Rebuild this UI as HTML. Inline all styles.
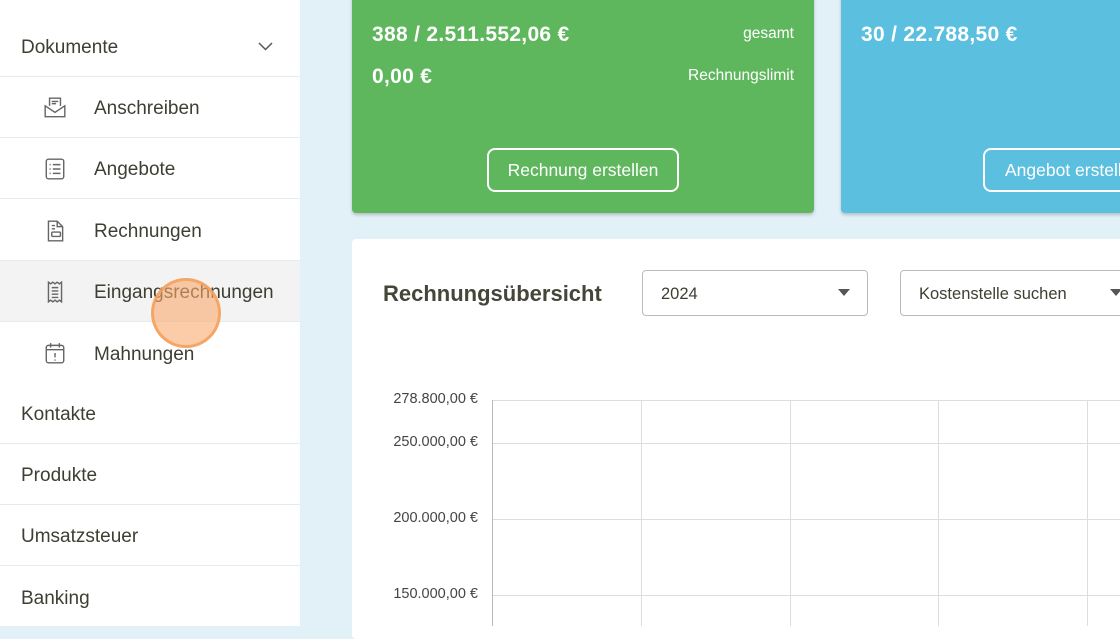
<!DOCTYPE html>
<html><head><meta charset="utf-8"><style>
*{margin:0;padding:0;box-sizing:border-box}
body{width:1120px;height:626px;overflow:hidden;background:#e2f0f7;font-family:"Liberation Sans",sans-serif;position:relative;color:#3e3e33}
.side{position:absolute;left:0;top:0;width:300px;height:626px;background:#fff}
.row{position:absolute;left:0;width:300px;height:61px;border-bottom:1px solid #e3ecef;font-size:19px;display:flex;align-items:center;padding-top:4px}
.row.top{padding-left:21px}
.row.sub{padding-left:94px}
.row svg{position:absolute;left:43px;top:19px}
.card{position:absolute;top:-10px;height:223px;border-radius:4px;box-shadow:0 2px 3px rgba(0,0,0,.2);color:#fff}
.big{position:absolute;font-weight:bold;font-size:21px;letter-spacing:0.3px}
.sm{position:absolute;font-size:15.5px}
.btn{position:absolute;border:2px solid #fff;border-radius:8px;height:44px;font-size:17.5px;display:flex;align-items:center;justify-content:center}
.panel{position:absolute;left:352px;top:239px;width:800px;height:400px;background:#fff;border-radius:4px}
.sel{position:absolute;top:31px;height:46px;border:1px solid #bbb;border-radius:4px;font-size:16.5px;padding-left:18px;padding-top:3px;display:flex;align-items:center}
.sel:after{content:"";position:absolute;right:17px;top:18px;border:6px solid transparent;border-top:7px solid #555}
.yl{position:absolute;right:642px;font-size:14.5px;color:#444}
.h{position:absolute;left:492px;right:0;height:1px;background:#ddd}
.v{position:absolute;top:400px;bottom:0;width:1px;background:#ddd}
</style></head><body>
<div class="side">
<div class="row top" style="top:16px">Dokumente<svg style="left:258px;top:26px" width="15" height="9" viewBox="0 0 15 9"><path d="M1 1l6.5 6.5L14 1" fill="none" stroke="#555" stroke-width="1.5"/></svg></div>
<div class="row sub" style="top:77px"><svg width="24" height="24" viewBox="0 0 22 22" fill="none" stroke="#666" stroke-width="1.3"><path d="M6 9V2h10v7M8 5h6M8 7h4M2 9l9 6 9-6v10H2z"/></svg>Anschreiben</div>
<div class="row sub" style="top:138px"><svg width="24" height="24" viewBox="0 0 22 22" fill="none" stroke="#666" stroke-width="1.3"><rect x="3" y="2" width="16" height="18" rx="2"/><path d="M6 7h1M9 7h7M6 11h1M9 11h7M6 15h1M9 15h7"/></svg>Angebote</div>
<div class="row sub" style="top:200px"><svg width="24" height="24" viewBox="0 0 22 22" fill="none" stroke="#666" stroke-width="1.3"><path d="M5 2h8l5 5v13H5zM13 2v5h5M8 6h3M8 9h3"/><rect x="8" y="12" width="8" height="4" rx="1"/></svg>Rechnungen</div>
<div class="row sub" style="top:261px;background:#f3f3f3"><svg width="24" height="24" viewBox="0 0 22 22" fill="none" stroke="#666" stroke-width="1.3"><path d="M5 2l2 1.5 2-1.5 2 1.5 2-1.5 2 1.5 2-1.5v18l-2-1.5-2 1.5-2-1.5-2 1.5-2-1.5-2 1.5zM8 7h6M8 10h6M8 13h6M8 16h6"/></svg>Eingangsrechnungen</div>
<div class="row sub" style="top:322px;border:none"><svg width="24" height="24" viewBox="0 0 22 22" fill="none" stroke="#666" stroke-width="1.3"><rect x="3" y="4" width="16" height="16" rx="2"/><path d="M3 8h16M7 2v4M15 2v4M11 11v4M11 17v1"/></svg>Mahnungen</div>
<div class="row top" style="top:383px">Kontakte</div>
<div class="row top" style="top:444px">Produkte</div>
<div class="row top" style="top:505px">Umsatzsteuer</div>
<div class="row top" style="top:566px;border:none">Banking</div>
</div>
<div class="card" style="left:352px;width:462px;background:#5fb75d">
<div class="big" style="left:20px;top:33px">388 / 2.511.552,06 €</div>
<div class="sm" style="right:20px;top:35px">gesamt</div>
<div class="big" style="left:20px;top:75px">0,00 €</div>
<div class="sm" style="right:20px;top:77px">Rechnungslimit</div>
<div class="btn" style="left:135px;top:158px;width:192px">Rechnung erstellen</div>
</div>
<div class="card" style="left:841px;width:300px;background:#5bbfe0">
<div class="big" style="left:20px;top:33px">30 / 22.788,50 €</div>
<div class="btn" style="left:142px;top:158px;width:200px;justify-content:flex-start;padding-left:20px">Angebot erstellen</div>
</div>
<div class="panel">
<div style="position:absolute;left:31px;top:42px;font-size:22px;font-weight:bold;color:#45453a">Rechnungsübersicht</div>
<div class="sel" style="left:290px;width:226px">2024</div>
<div class="sel" style="left:548px;width:240px">Kostenstelle suchen</div>
</div>
<div class="h" style="top:400px"></div><div class="h" style="top:443px"></div><div class="h" style="top:519px"></div><div class="h" style="top:595px"></div>
<div class="v" style="left:492px;background:#bbb"></div><div class="v" style="left:641px"></div><div class="v" style="left:790px"></div><div class="v" style="left:938px"></div><div class="v" style="left:1087px"></div>
<div class="yl" style="top:391px">278.800,00 €</div>
<div class="yl" style="top:434px">250.000,00 €</div>
<div class="yl" style="top:510px">200.000,00 €</div>
<div class="yl" style="top:586px">150.000,00 €</div>
<div style="position:absolute;left:151px;top:278px;width:70px;height:70px;border-radius:50%;background:rgba(250,170,110,.6);border:3px solid rgba(245,160,90,.85)"></div>
</body></html>
